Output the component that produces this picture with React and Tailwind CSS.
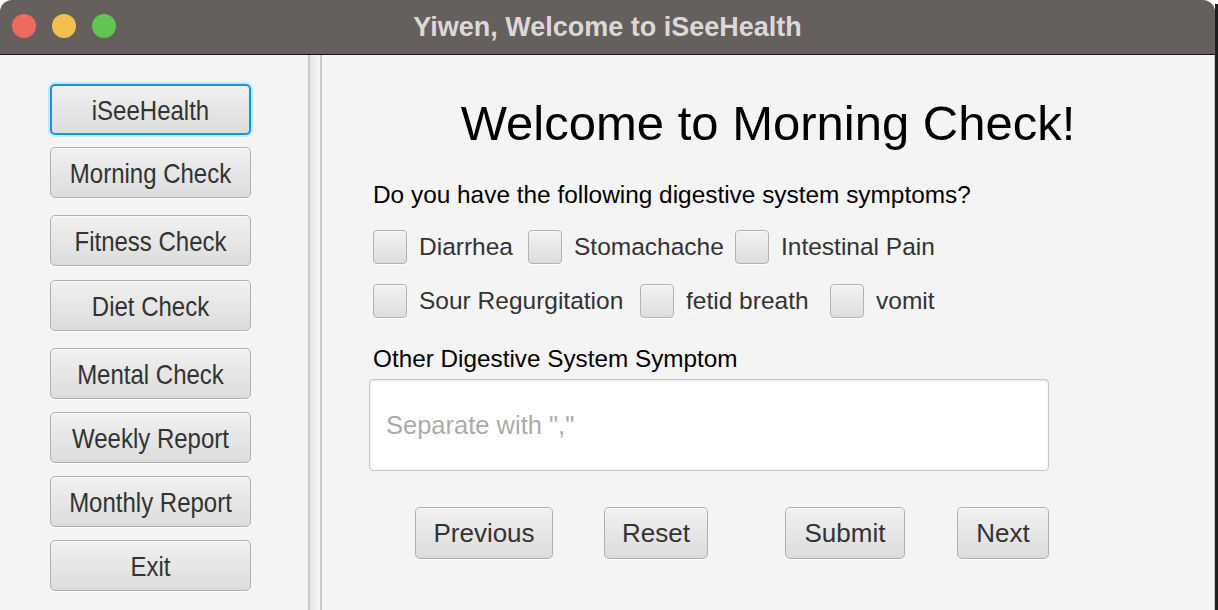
import { useState } from 'react';

const NAV = [
  { label: 'iSeeHealth', gap: 'mt-[29px]', focus: true },
  { label: 'Morning Check', gap: 'mt-[12px]' },
  { label: 'Fitness Check', gap: 'mt-[17px]' },
  { label: 'Diet Check', gap: 'mt-[14px]' },
  { label: 'Mental Check', gap: 'mt-[17px]' },
  { label: 'Weekly Report', gap: 'mt-[13px]' },
  { label: 'Monthly Report', gap: 'mt-[13px]' },
  { label: 'Exit', gap: 'mt-[13px]' },
];

const ROW_ONE = [
  { label: 'Diarrhea', w: 'w-[155px]' },
  { label: 'Stomachache', w: 'w-[207px]' },
  { label: 'Intestinal Pain', w: 'w-auto' },
];

const ROW_TWO = [
  { label: 'Sour Regurgitation', w: 'w-[267px]' },
  { label: 'fetid breath', w: 'w-[190px]' },
  { label: 'vomit', w: 'w-auto' },
];

const ACTIONS = [
  { label: 'Previous', cls: 'ml-[42px] w-[138px]' },
  { label: 'Reset', cls: 'ml-[51px] w-[104px]' },
  { label: 'Submit', cls: 'ml-[77px] w-[120px]' },
  { label: 'Next', cls: 'ml-[52px] w-[92px]' },
];

function NavButton({ label, focus, gap }) {
  return (
    <button
      className={
        'flex h-[51px] w-[201px] items-center justify-center rounded-[5px] bg-gradient-to-b from-[#f1f1f1] to-[#dcdcdc] text-[24px] leading-none text-[#333] ' +
        gap +
        (focus
          ? ' border-2 border-[#0a9bd8] shadow-[0_0_0_2px_#c4e6f6]'
          : ' border border-[#b0b0b0] shadow-[inset_0_1px_0_#fbfbfb,0_1px_0_#ffffff]')
      }
    >
      <span className="inline-block translate-y-[1px] scale-y-[1.18]">{label}</span>
    </button>
  );
}

function Check({ label, w }) {
  const [on, setOn] = useState(false);
  return (
    <label className={'flex items-center gap-3 ' + w}>
      <span
        onClick={() => setOn(!on)}
        className="flex h-[34px] w-[34px] items-center justify-center rounded-[4px] border border-[#b2b2b2] bg-gradient-to-b from-[#f2f2f2] to-[#dddddd] shadow-[inset_0_1px_0_#fafafa,0_1px_0_#ffffff] text-[#333]"
      >
        {on ? '✓' : ''}
      </span>
      <span className="text-[24.5px] leading-none text-[#333]">{label}</span>
    </label>
  );
}

export default function App() {
  return (
    <div className="flex h-[610px] w-[1218px] overflow-hidden bg-white [font-family:'Liberation_Sans',Arial,sans-serif]">
      <div className="flex h-full w-[1215px] flex-col overflow-hidden rounded-t-[12px] bg-[#f4f4f4]">
        {/* title bar */}
        <div className="relative flex h-[55px] shrink-0 items-center justify-center border-b border-[#151515] bg-[#655f5e]">
          <div className="absolute left-[12px] top-[14px] flex gap-4">
            <span className="h-6 w-6 rounded-full bg-[#ee6a5f]" />
            <span className="h-6 w-6 rounded-full bg-[#f5bf4f]" />
            <span className="h-6 w-6 rounded-full bg-[#61c554]" />
          </div>
          <span className="text-[27px] font-bold text-[#dcd8d7]">Yiwen, Welcome to iSeeHealth</span>
        </div>

        <div className="flex min-h-0 flex-1">
          {/* side nav */}
          <div className="flex w-[308px] shrink-0 flex-col pl-[50px]">
            {NAV.map((n) => (
              <NavButton key={n.label} {...n} />
            ))}
          </div>

          {/* splitter */}
          <div className="w-[14px] shrink-0 border-x-2 border-[#c9c9c9] bg-gradient-to-r from-[#e6e6e6] to-[#f7f7f7]" />

          {/* main */}
          <div className="flex flex-1 flex-col border-r border-[#c4c4c4]">
            <h1 className="mt-[44px] text-center text-[49px] leading-[49px] text-black">
              Welcome to Morning Check!
            </h1>

            <div className="flex flex-col pl-[51px]">
              <p className="mt-[35px] text-[24.4px] leading-[24px] text-black">
                Do you have the following digestive system symptoms?
              </p>

              <div className="mt-[23px] flex">
                {ROW_ONE.map((c) => (
                  <Check key={c.label} {...c} />
                ))}
              </div>
              <div className="mt-[20px] flex">
                {ROW_TWO.map((c) => (
                  <Check key={c.label} {...c} />
                ))}
              </div>

              <p className="mt-[29px] text-[24.3px] leading-[24px] text-black">Other Digestive System Symptom</p>

              <textarea
                placeholder='Separate with ","'
                className="ml-[-4px] mt-[8px] h-[92px] w-[680px] resize-none rounded-[4px] border border-[#c6c6c6] bg-white pl-[16px] pt-[30px] text-[25.5px] leading-[30px] text-[#333] shadow-[inset_0_1px_2px_#e2e2e2] outline-none placeholder:text-[#ababab]"
              />

              <div className="mt-[36px] flex">
                {ACTIONS.map((a) => (
                  <button
                    key={a.label}
                    className={
                      'h-[52px] rounded-[5px] border border-[#b0b0b0] bg-gradient-to-b from-[#f1f1f1] to-[#dcdcdc] text-[26px] leading-none text-[#333] shadow-[inset_0_1px_0_#fbfbfb,0_1px_0_#ffffff] ' +
                      a.cls
                    }
                  >
                    {a.label}
                  </button>
                ))}
              </div>
            </div>
          </div>
        </div>
      </div>
      <div className="mt-[4px] h-full w-[3px] bg-[#1e1e1e]" />
    </div>
  );
}
